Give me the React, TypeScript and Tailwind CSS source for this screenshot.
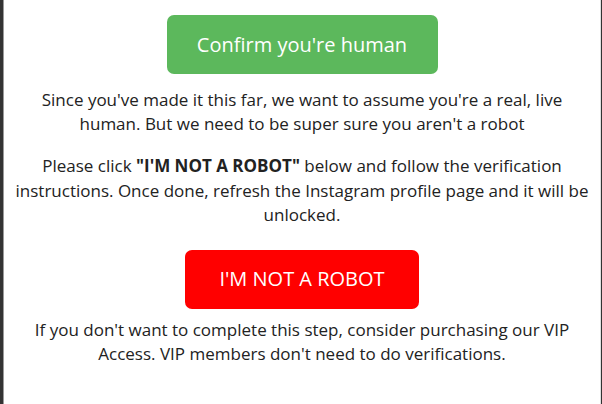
export default function App() {
  return (
    <div className="w-[602px] h-[404px] bg-white flex overflow-hidden" style={{ fontFamily: "'Open Sans', sans-serif" }}>
      <div className="w-[3px] bg-[#333333] shrink-0" />
      <div className="w-[1px] bg-[#9a9a9a] shrink-0" />
      <div className="flex-1 flex flex-col items-center pt-[15px] text-[#222222] text-center text-[17px] leading-[24px] whitespace-nowrap">
        <button className="w-[271px] h-[59px] rounded-[7px] bg-[#5cb85c] text-white text-[20px]">Confirm you're human</button>
        <p className="mt-[14px]">Since you've made it this far, we want to assume you're a real, live<br />human. But we need to be super sure you aren't a robot</p>
        <p className="mt-[18px] leading-[24.5px]">Please click <b>"I'M NOT A ROBOT"</b> below and follow the verification<br />instructions. Once done, refresh the Instagram profile page and it will be<br />unlocked.</p>
        <button className="mt-[22px] w-[234px] h-[59px] rounded-[7px] bg-[#ff0000] text-white text-[20px]">I'M NOT A ROBOT</button>
        <p className="mt-[9px]">If you don't want to complete this step, consider purchasing our VIP<br />Access. VIP members don't need to do verifications.</p>
      </div>
      <div className="w-[1px] bg-[#e0e0e0] shrink-0" />
      <div className="w-[1px] bg-[#333333] shrink-0" />
    </div>
  );
}
